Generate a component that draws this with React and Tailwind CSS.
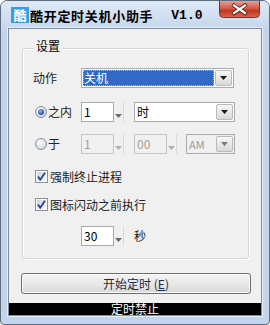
import React from "react";

// small pieces of the Win7 dialog
const Arrow = ({ color = "#222" }) => (
  <svg width="7" height="4" viewBox="0 0 7 4">
    <path d="M0 0h7L3.5 4z" fill={color} />
  </svg>
);

const CloseBtn = () => (
  <svg width="41" height="17" viewBox="0 0 41 17" className="ml-auto mr-[9px] shrink-0">
    <defs>
      <linearGradient id="closeGrad" x1="0" y1="0" x2="0" y2="1">
        <stop offset="0" stopColor="#e8a090" />
        <stop offset="0.45" stopColor="#cf5a44" />
        <stop offset="0.6" stopColor="#c0371f" />
        <stop offset="1" stopColor="#d66a52" />
      </linearGradient>
    </defs>
    <path d="M0.5 0V12.5a4 4 0 0 0 4 4H36.5a4 4 0 0 0 4-4V0" fill="url(#closeGrad)" stroke="#7d2e22" />
    <path d="M15 4.5l11 7.5M26 4.5l-11 7.5" stroke="#4a1f18" strokeWidth="3.8" strokeLinecap="square" />
    <path d="M15 4.5l11 7.5M26 4.5l-11 7.5" stroke="#ffffff" strokeWidth="2.2" strokeLinecap="square" />
  </svg>
);

const DropBtn = ({ disabled }) => (
  <div className="flex h-full w-[17px] items-center justify-center rounded-[2px] border border-[#b9b9b9] bg-linear-to-b from-[#f7f7f7] to-[#d9d9d9]">
    <Arrow color={disabled ? "#7a7a7a" : "#1a1a1a"} />
  </div>
);

const Combo = ({ width, disabled, selected, children }) => (
  <div
    className={`flex h-[20px] shrink-0 border border-[#a7abb0] p-[1px] ${width} ${
      disabled ? "bg-[#f0f0f0] text-[#9a9a9a]" : "bg-white text-black"
    }`}
  >
    {selected ? (
      <div className="flex flex-1 items-center border border-dotted border-[#d9b048] bg-[#316ac5] text-white leading-[14px] mr-[1px]">
        {children}
      </div>
    ) : (
      <div className="flex flex-1 items-center pl-[1px] leading-[14px]">{children}</div>
    )}
    <DropBtn disabled={disabled} />
  </div>
);

const Spin = ({ value, disabled }) => (
  <div className="flex h-[20px] shrink-0">
    <div
      className={`flex h-full w-[33px] items-center border pl-[2px] leading-[14px] ${
        disabled
          ? "border-[#c6c6c6] bg-[#f0f0f0] text-[#a0a0a0]"
          : "border-[#a7abb0] bg-white text-black"
      }`}
    >
      {value}
    </div>
    <div className="flex h-full w-[9px] items-end justify-center pb-[4px]">
      <Arrow color={disabled ? "#b0b0b0" : "#6a6a6a"} />
    </div>
    <div className="h-full w-[1px] bg-[#dadada]" />
  </div>
);

const Radio = ({ checked }) => (
  <svg width="12" height="12" viewBox="0 0 12 12" className="shrink-0">
    <defs>
      <radialGradient id={checked ? "rOn" : "rOff"} cx="0.4" cy="0.35" r="0.7">
        <stop offset="0" stopColor="#ffffff" />
        <stop offset="1" stopColor="#c9d2dc" />
      </radialGradient>
      <radialGradient id="dot" cx="0.4" cy="0.35" r="0.7">
        <stop offset="0" stopColor="#8fb8ec" />
        <stop offset="1" stopColor="#1b3f8f" />
      </radialGradient>
    </defs>
    <circle cx="6" cy="6" r="5.5" fill={`url(#${checked ? "rOn" : "rOff"})`} stroke="#8a8f96" />
    {checked && <circle cx="6" cy="6" r="3" fill="url(#dot)" />}
  </svg>
);

const Check = () => (
  <svg width="13" height="13" viewBox="0 0 13 13" className="shrink-0">
    <defs>
      <linearGradient id="cb" x1="0" y1="0" x2="1" y2="1">
        <stop offset="0" stopColor="#c8d4e2" />
        <stop offset="1" stopColor="#f4f7fa" />
      </linearGradient>
    </defs>
    <rect x="0.5" y="0.5" width="12" height="12" fill="#fff" stroke="#8e8f8f" />
    <rect x="2" y="2" width="9" height="9" fill="url(#cb)" />
    <path d="M3 6.5l2.2 3.2L10 2.8" fill="none" stroke="#2b3f86" strokeWidth="1.8" />
  </svg>
);

const App = () => {
  return (
    <div className="h-[325px] w-[270px] bg-white font-['Noto_Sans_CJK_SC',sans-serif] text-[12px]">
      <div className="flex h-[325px] w-[270px] flex-col rounded-t-[7px] rounded-b-[4px] border border-[#5d6b7c] bg-[#c3d5ec]">
        {/* TITLE BAR */}
        <div className="flex h-[27px] shrink-0 items-start rounded-t-[6px] bg-linear-to-b from-[#dfe9f6] to-[#c6d7ed]">
          <div className="ml-[10px] mt-[6px] flex h-[16px] w-[18px] shrink-0 items-center justify-center bg-[#3d9be3] text-[13px] font-bold leading-[16px] text-white">
            酷
          </div>
          <div className="ml-[1px] mt-[7px] shrink-0 text-[13px] font-bold leading-[16px] tracking-[0.7px] text-black">
            酷开定时关机小助手
          </div>
          <div className="ml-[18px] mt-[7px] shrink-0 font-['Liberation_Mono',monospace] text-[13px] font-bold leading-[16px] text-black">
            V1.0
          </div>
          <CloseBtn />
        </div>

        {/* CLIENT AREA */}
        <div className="mx-[7px] flex h-[288px] shrink-0 flex-col border border-[#7f8c99] bg-[#f0f0f0] shadow-[0_0_0_1px_#e6eef8]">
          {/* group box */}
          <div className="relative ml-[13px] mt-[19px] flex h-[211px] w-[227px] flex-col rounded-[3px] border border-[#d3d7db] shadow-[inset_1px_1px_0_#ffffff,1px_1px_0_#ffffff]">
            <span className="absolute -top-[10px] left-[11px] bg-[#f0f0f0] px-[2px] leading-[14px] text-black">
              设置
            </span>

            {/* action */}
            <div className="mt-[19px] flex h-[20px] items-center">
              <div className="w-[58px] pl-[10px] leading-[14px] text-[#222]">动作</div>
              <Combo width="w-[153px]" selected>
                关机
              </Combo>
            </div>

            {/* within */}
            <div className="mt-[14px] flex h-[20px] items-center">
              <div className="flex w-[58px] items-center pl-[12px]">
                <Radio checked />
                <span className="ml-[1px] leading-[14px] text-[#222]">之内</span>
              </div>
              <Spin value="1" />
              <div className="w-[10px]" />
              <Combo width="w-[101px]">时</Combo>
            </div>

            {/* at */}
            <div className="mt-[12px] flex h-[20px] items-center">
              <div className="flex w-[58px] items-center pl-[12px]">
                <Radio />
                <span className="ml-[1px] leading-[14px] text-[#222]">于</span>
              </div>
              <Spin value="1" disabled />
              <div className="w-[10px]" />
              <Spin value="00" disabled />
              <div className="w-[9px]" />
              <Combo width="w-[49px]" disabled>
                <span className="text-[11px]">AM</span>
              </Combo>
            </div>

            {/* checkboxes */}
            <div className="mt-[16px] flex h-[13px] items-center pl-[12px]">
              <Check />
              <span className="ml-[2px] leading-[14px] text-[#222]">强制终止进程</span>
            </div>
            <div className="mt-[15px] flex h-[13px] items-center pl-[12px]">
              <Check />
              <span className="ml-[2px] leading-[14px] text-[#222]">图标闪动之前执行</span>
            </div>

            {/* seconds */}
            <div className="mt-[15px] flex h-[20px] items-center pl-[58px]">
              <Spin value="30" />
              <div className="w-[10px]" />
              <span className="leading-[14px] text-[#222]">秒</span>
            </div>
          </div>

          {/* start button */}
          <div className="ml-[12px] mt-[14px] flex h-[21px] w-[230px] items-center justify-center rounded-[3px] border border-[#707070] bg-linear-to-b from-[#f4f4f4] via-[#e9e9e9] to-[#d7d7d7] leading-[14px] text-[#1c2b4a] shadow-[inset_0_0_0_1px_#fbfbfb]">
            开始定时 (<span className="underline">E</span>)
          </div>

          {/* status bar */}
          <div className="mt-auto flex h-[12px] items-center justify-center bg-black leading-[12px] text-white">
            定时禁止
          </div>
        </div>
      </div>
    </div>
  );
};

export default App;
